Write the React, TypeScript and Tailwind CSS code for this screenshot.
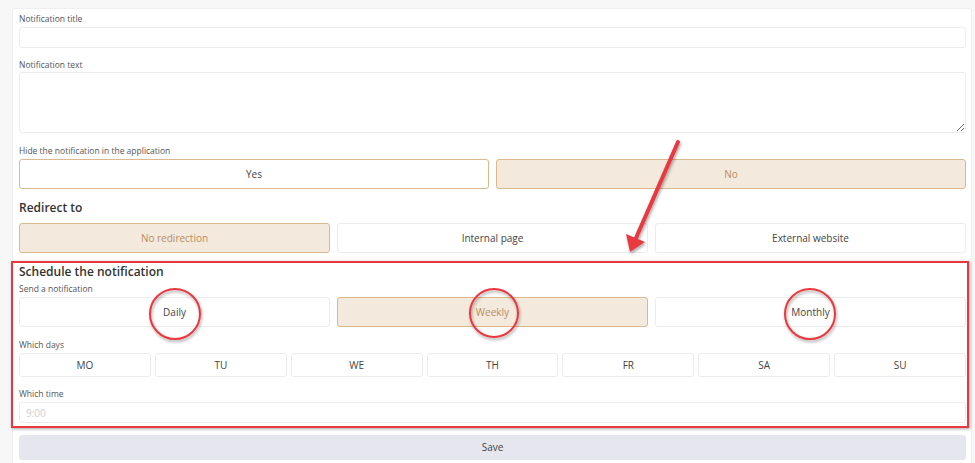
import { useState } from 'react';

const font = { fontFamily: '"Open Sans", "Liberation Sans", sans-serif' };

function Choice({ label, active, onClick, tanBorder }: { label: string; active: boolean; onClick: () => void; tanBorder?: boolean }) {
  return (
    <button
      onClick={onClick}
      className={
        'flex-1 rounded-[3px] border text-[10px] ' +
        (active
          ? 'bg-[#f3e9dd] border-[#dcb88e] text-[#b98c5e]'
          : tanBorder
          ? 'bg-white border-[#dcb88e] text-[#444]'
          : 'bg-white border-[#ececef] text-[#444]')
      }
    >
      {label}
    </button>
  );
}

function Label({ children }: { children: string }) {
  return <div className="text-[8.5px] leading-[12px] text-[#555]">{children}</div>;
}

export default function App() {
  const [hide, setHide] = useState('No');
  const [redirect, setRedirect] = useState('No redirection');
  const [freq, setFreq] = useState('Weekly');
  const [days, setDays] = useState<string[]>([]);

  const toggleDay = (d: string) =>
    setDays((prev) => (prev.includes(d) ? prev.filter((x) => x !== d) : [...prev, d]));

  return (
    <div className="relative min-h-[463px] bg-[#f7f7f8] pt-[8px] pl-[12px] pr-[3px]" style={font}>
      <div className="bg-white border border-[#efefef] rounded-[3px] pt-[4px] pl-[6px] pr-[5px] pb-[8px]">
        <Label>Notification title</Label>
        <input className="mt-[2px] block w-full h-[21px] rounded-[3px] border border-[#ececef] outline-none" />

        <div className="mt-[11px]">
          <Label>Notification text</Label>
        </div>
        <textarea className="mt-[1px] block w-full h-[61px] rounded-[3px] border border-[#ececef] outline-none" />

        <div className="mt-[12px]">
          <Label>Hide the notification in the application</Label>
        </div>
        <div className="mt-[2px] flex gap-[7px] h-[30px]">
          {['Yes', 'No'].map((o) => (
            <Choice key={o} label={o} active={hide === o} tanBorder onClick={() => setHide(o)} />
          ))}
        </div>

        <div className="mt-[11px] text-[12px] leading-[16px] font-semibold text-[#333]">Redirect to</div>
        <div className="mt-[7px] flex gap-[7px] h-[30px]">
          {['No redirection', 'Internal page', 'External website'].map((o) => (
            <Choice key={o} label={o} active={redirect === o} onClick={() => setRedirect(o)} />
          ))}
        </div>

        <div className="mt-[8px] -ml-[8px] -mr-[3px] border-2 border-[#e8383f] pl-[6px] pr-[1px] pt-[1px] pb-[3px] shadow-[1px_1px_3px_rgba(0,0,0,0.35)]">
          <div className="text-[12px] leading-[16px] font-semibold text-[#333]">Schedule the notification</div>
          <div className="mt-[3px]">
            <Label>Send a notification</Label>
          </div>
          <div className="mt-[2px] flex gap-[7px] h-[30px]">
            {['Daily', 'Weekly', 'Monthly'].map((o) => (
              <Choice key={o} label={o} active={freq === o} onClick={() => setFreq(o)} />
            ))}
          </div>

          <div className="mt-[12px]">
            <Label>Which days</Label>
          </div>
          <div className="mt-[2px] flex gap-[4px] h-[24px]">
            {['MO', 'TU', 'WE', 'TH', 'FR', 'SA', 'SU'].map((d) => (
              <Choice key={d} label={d} active={days.includes(d)} onClick={() => toggleDay(d)} />
            ))}
          </div>

          <div className="mt-[11px]">
            <Label>Which time</Label>
          </div>
          <input
            placeholder="9:00"
            className="mt-[2px] block w-full h-[21px] rounded-[3px] border border-[#ececef] pl-[6px] text-[10px] placeholder:text-[#cfcfd4] outline-none"
          />
        </div>

        <button className="mt-[7px] w-full h-[25px] rounded-[3px] bg-[#e5e6ee] text-[10px] text-[#444]">Save</button>
      </div>

      {/* annotations */}
      <svg className="pointer-events-none absolute inset-0" width="975" height="463">
        <defs>
          <filter id="sh" x="-20%" y="-20%" width="140%" height="140%">
            <feDropShadow dx="1" dy="2" stdDeviation="1.5" floodColor="#000" floodOpacity="0.35" />
          </filter>
        </defs>
        <g filter="url(#sh)" fill="none" stroke="#e8383f" strokeWidth="2">
          <circle cx="175" cy="314" r="25" />
          <circle cx="494" cy="313" r="24" />
          <circle cx="810" cy="314" r="25" />
        </g>
        <g filter="url(#sh)">
          <line x1="678" y1="142" x2="636" y2="238" stroke="#e8383f" strokeWidth="4" strokeLinecap="round" />
          <polygon points="630,252 626,234 645,242" fill="#e8383f" />
        </g>
      </svg>
    </div>
  );
}
